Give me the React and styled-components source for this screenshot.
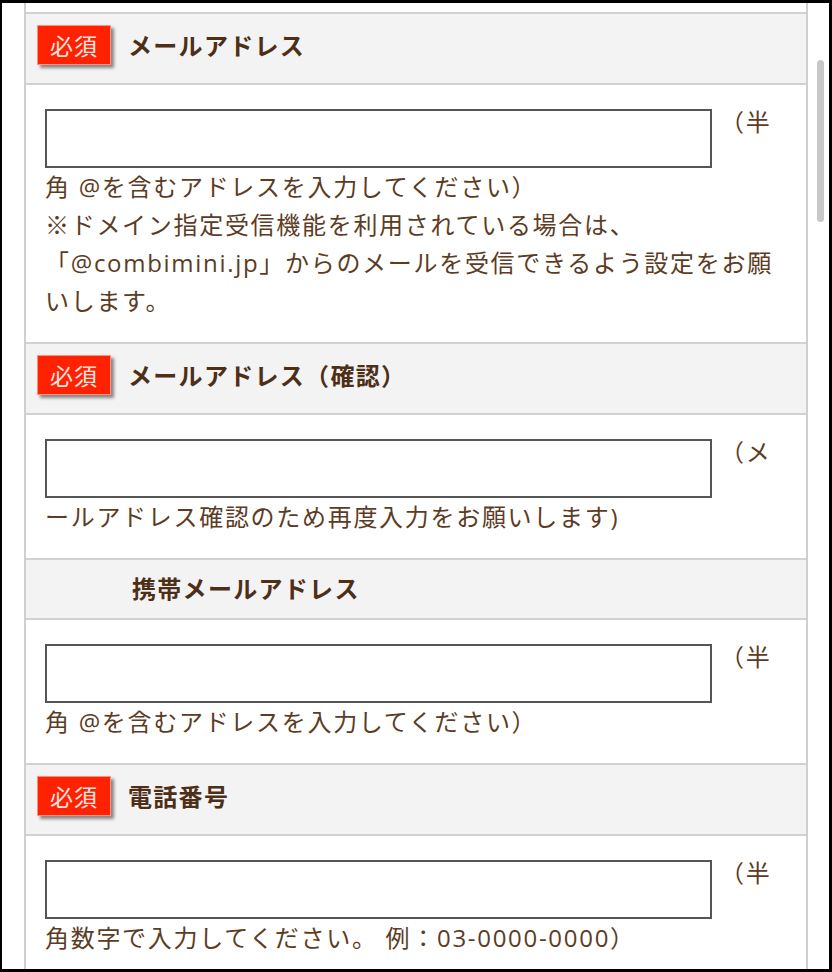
import React from "react";
import styled, { createGlobalStyle } from "styled-components";

const Global = createGlobalStyle`
  html, body { margin: 0; padding: 0; background: #fff; }
  body { font-family: "Open Sans", "Noto Sans CJK JP", sans-serif; }
`;

const Frame = styled.div`
  position: relative;
  box-sizing: border-box;
  width: 832px;
  height: 972px;
  overflow: hidden;
  background: #fff;
  border-style: solid;
  border-color: #000;
  border-width: 3px 3px 3px 2px;
`;

const Table = styled.div`
  margin-left: 22px;
  width: 784px;
  box-sizing: border-box;
  border-left: 2px solid #cfcfcf;
  border-right: 2px solid #cfcfcf;
  display: flex;
  flex-direction: column;
`;

const Header = styled.div`
  display: flex;
  align-items: center;
  border-top: 2px solid #d2d2d2;
  background: #f3f3f3;
  padding: ${(p) => (p.$required ? "11px 12px 18px 11px" : "11px 12px 13px 106px")};
`;

const Badge = styled.span`
  display: inline-flex;
  align-items: center;
  justify-content: center;
  box-sizing: border-box;
  width: 74px;
  height: 40px;
  margin-right: 17px;
  background: #ff2200;
  border: 1px solid #ff8f80;
  box-shadow: 3px 3px 3px rgba(0, 0, 0, 0.45);
  color: #ffe4e0;
  font-family: "Noto Sans CJK JP", sans-serif;
  font-size: 23px;
  font-weight: 400;
  letter-spacing: 1px;
  line-height: 1;
`;

const Title = styled.span`
  font-family: "Noto Sans CJK JP", sans-serif;
  font-weight: 700;
  font-size: 24px;
  line-height: 34px;
  letter-spacing: 1.3px;
  color: #4d2f18;
`;

const Cell = styled.div`
  border-top: ${(p) => (p.$first ? "none" : "2px solid #d2d2d2")};
  background: #fff;
  padding: ${(p) => (p.$first ? "0" : "18px 19px 22px 19px")};
  height: ${(p) => (p.$first ? "9px" : "auto")};
  font-size: 24px;
  line-height: 38px;
  letter-spacing: 1.7px;
  color: #5c3c24;
  line-break: normal;
`;

const TextInput = styled.input`
  display: inline-block;
  vertical-align: top;
  box-sizing: border-box;
  width: 667px;
  height: 59px;
  margin: 6px 0 0 0;
  padding: 0 8px;
  border: 2px solid #555;
  border-radius: 0;
  background: #fff;
  outline: none;
  font-size: 20px;
`;

const Scrollbar = styled.div`
  position: absolute;
  top: 57px;
  left: 815px;
  width: 7px;
  height: 162px;
  border-radius: 4px;
  background: #c8c8c8;
`;

function Row({ required, title, children }) {
  return (
    <>
      <Header $required={required}>
        {required && <Badge>必須</Badge>}
        <Title>{title}</Title>
      </Header>
      <Cell>{children}</Cell>
    </>
  );
}

export default function App() {
  return (
    <>
      <Global />
      <Frame>
        <Table>
          <Cell $first />
          <Row required title="メールアドレス">
            <TextInput type="text" /> （半角 @を含むアドレスを入力してください）
            <br />
            ※ドメイン指定受信機能を利用されている場合は、
            <br />
            「@combimini.jp」からのメールを受信できるよう設定をお願いします。
          </Row>
          <Row required title="メールアドレス（確認）">
            <TextInput type="text" /> （メールアドレス確認のため再度入力をお願いします)
          </Row>
          <Row title="携帯メールアドレス">
            <TextInput type="text" /> （半角 @を含むアドレスを入力してください）
          </Row>
          <Row required title="電話番号">
            <TextInput type="text" /> （半角数字で入力してください。 例：03-0000-0000）
          </Row>
        </Table>
        <Scrollbar />
      </Frame>
    </>
  );
}
